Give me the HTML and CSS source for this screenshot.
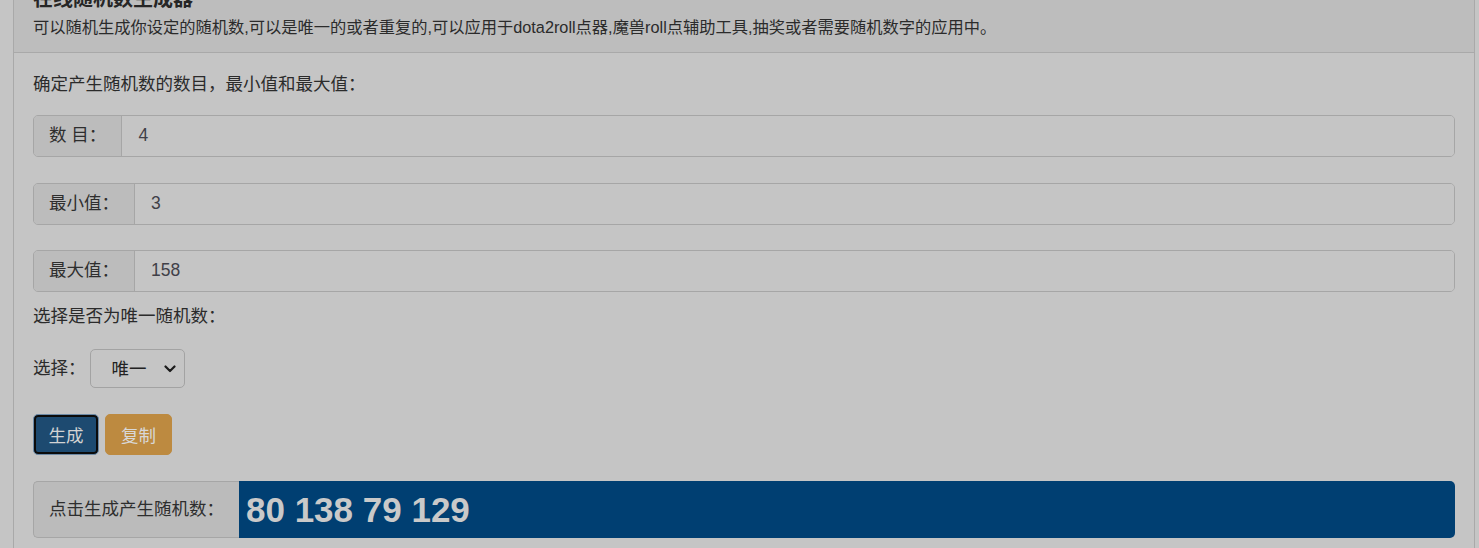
FILE: index.html
```html
<!DOCTYPE html>
<html lang="zh-CN">
<head>
<meta charset="utf-8">
<title>在线随机数生成器</title>
<link rel="stylesheet" href="styles.css">
</head>
<body>
<div class="page">
  <div class="panel">
    <div class="panel-heading">
      <h3 class="panel-title">在线随机数生成器</h3>
      <p class="panel-desc">可以随机生成你设定的随机数,可以是唯一的或者重复的,可以应用于dota2roll点器,魔兽roll点辅助工具,抽奖或者需要随机数字的应用中。</p>
    </div>
    <div class="panel-body">
      <p class="label-line">确定产生随机数的数目，最小值和最大值：</p>
      <div class="input-group first">
        <span class="addon">数 目：</span>
        <input class="field" type="text" value="4">
      </div>
      <div class="input-group second">
        <span class="addon">最小值：</span>
        <input class="field" type="text" value="3">
      </div>
      <div class="input-group third">
        <span class="addon">最大值：</span>
        <input class="field" type="text" value="158">
      </div>
      <p class="label-line unique">选择是否为唯一随机数：</p>
      <div class="select-row">
        <span class="select-label">选择：</span>
        <span class="select-wrap">
          <select class="select">
            <option>唯一</option>
            <option>重复</option>
          </select>
          <svg class="chevron" width="12" height="8" viewBox="0 0 12 8"><path d="M1.5 1.5 L6 6 L10.5 1.5" fill="none" stroke="#1c1c1c" stroke-width="2.2" stroke-linecap="round" stroke-linejoin="round"/></svg>
        </span>
      </div>
      <div class="btn-row">
        <button class="btn btn-primary" type="button">生成</button>
        <button class="btn btn-warning" type="button">复制</button>
      </div>
      <div class="result-group">
        <span class="addon result-addon">点击生成产生随机数：</span>
        <div class="result">80 138 79 129</div>
      </div>
    </div>
  </div>
</div>
</body>
</html>
```
FILE: styles.css
```css
* { box-sizing: border-box; }
html, body {
  margin: 0;
  padding: 0;
  background: #c5c5c5;
  overflow: hidden;
}
body {
  font-family: "Liberation Sans", "Noto Sans CJK SC", sans-serif;
  font-size: 17.5px;
  line-height: 25px;
  color: #2b2b2b;
}
.page {
  padding: 0 4px 0 13px;
}
.panel {
  margin-top: -25px;
  border: 1px solid #a9a9a9;
  background: #c5c5c5;
  height: 600px;
}
.panel-heading {
  background: #bdbdbd;
  border-bottom: 1px solid #a9a9a9;
  padding: 12px 19px 13px;
}
.panel-title {
  margin: 0;
  font-size: 20px;
  line-height: 22px;
  font-weight: bold;
  color: #262626;
}
.panel-desc {
  margin: 5.5px 0 0;
  font-size: 16.25px;
  line-height: 23px;
  color: #2b2b2b;
}
.panel-body {
  padding: 19px 19px;
}
.label-line {
  margin: 0;
}
.input-group {
  display: flex;
  height: 42px;
  border: 1px solid #a6a6a6;
  border-radius: 5px;
  overflow: hidden;
}
.input-group.first { margin-top: 18px; }
.input-group.second { margin-top: 26px; }
.input-group.third { margin-top: 25px; }
.addon {
  display: flex;
  align-items: center;
  padding: 0 15px 0 15px;
  background: #bcbcbc;
  border-right: 1px solid #a6a6a6;
  white-space: nowrap;
  color: #2e2e2e;
}
.field {
  flex: 1;
  border: 0;
  background: #c5c5c5;
  font-family: "Liberation Sans", "Noto Sans CJK SC", sans-serif;
  font-size: 17.5px;
  color: #404048;
  padding: 0 16px;
  outline: none;
}
.unique { margin-top: 12px; }
.select-row {
  display: flex;
  align-items: center;
  margin-top: 20.5px;
  height: 39px;
}
.select-label {
  margin-right: 4px;
}
.select-wrap {
  position: relative;
  display: inline-block;
  width: 95px;
  height: 39px;
}
.select {
  appearance: none;
  -webkit-appearance: none;
  width: 100%;
  height: 100%;
  border: 1px solid #a3a3a3;
  border-radius: 5px;
  background: #c5c5c5;
  font-family: "Liberation Sans", "Noto Sans CJK SC", sans-serif;
  font-size: 17.5px;
  color: #222;
  padding: 0 0 0 21px;
  outline: none;
}
.chevron {
  position: absolute;
  right: 9px;
  top: 16px;
  pointer-events: none;
}
.btn-row {
  display: flex;
  gap: 6px;
  margin-top: 26px;
}
.btn {
  height: 41px;
  padding: 0 14px;
  border-radius: 5px;
  font-family: "Liberation Sans", "Noto Sans CJK SC", sans-serif;
  font-size: 17.5px;
  color: #d3d3d3;
  cursor: pointer;
}
.btn-primary {
  width: 66px;
  background: #1d4a70;
  border: 1px solid #6d8aa6;
  box-shadow: inset 0 0 0 2px #0b0b0b;
}
.btn-warning {
  width: 67px;
  background: #bd8a40;
  border: 1px solid #bd8a40;
  color: #d8d8d8;
}
.result-group {
  display: flex;
  margin-top: 26px;
  height: 57px;
}
.result-addon {
  border: 1px solid #a6a6a6;
  border-right: 0;
  border-radius: 5px 0 0 5px;
  background: #bbbbbb;
  padding: 0 15px 0 15px;
}
.result {
  flex: 1;
  display: flex;
  align-items: center;
  background: #003f72;
  border-radius: 0 5px 5px 0;
  color: #c9c9c9;
  font-family: "Liberation Sans", Arial, sans-serif;
  font-size: 35px;
  font-weight: bold;
  padding-left: 7px;
}
```
